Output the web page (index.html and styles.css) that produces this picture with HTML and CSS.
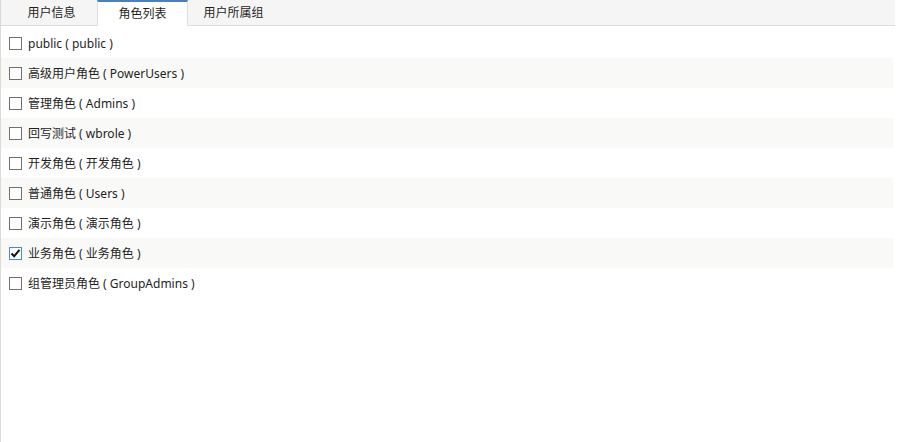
FILE: index.html
```html
<!DOCTYPE html>
<html lang="zh-CN">
<head>
<meta charset="utf-8">
<title>角色列表</title>
<link rel="stylesheet" href="styles.css">
</head>
<body>
<div class="panel">
  <div class="tabs">
    <div class="tab">用户信息</div>
    <div class="tab active">角色列表</div>
    <div class="tab">用户所属组</div>
  </div>
  <ul class="list">
    <li class="row"><span class="cb"></span><span class="label">public ( public )</span></li>
    <li class="row"><span class="cb"></span><span class="label">高级用户角色 ( PowerUsers )</span></li>
    <li class="row"><span class="cb"></span><span class="label">管理角色 ( Admins )</span></li>
    <li class="row"><span class="cb"></span><span class="label">回写测试 ( wbrole )</span></li>
    <li class="row"><span class="cb"></span><span class="label">开发角色 ( 开发角色 )</span></li>
    <li class="row"><span class="cb"></span><span class="label">普通角色 ( Users )</span></li>
    <li class="row"><span class="cb"></span><span class="label">演示角色 ( 演示角色 )</span></li>
    <li class="row"><span class="cb checked"><svg viewBox="0 0 13 13" width="13" height="13"><path d="M2.5 6.5 L5.2 9.2 L10.5 2.8" fill="none" stroke="#111" stroke-width="2"/></svg></span><span class="label">业务角色 ( 业务角色 )</span></li>
    <li class="row"><span class="cb"></span><span class="label">组管理员角色 ( GroupAdmins )</span></li>
  </ul>
</div>
</body>
</html>
```
FILE: styles.css
```css
html, body {
  margin: 0;
  padding: 0;
  background: #fff;
}
body {
  font-family: "Noto Sans", "Noto Sans CJK SC", sans-serif;
  font-size: 12px;
  color: #1e1e1e;
}
.panel {
  height: 442px;
  box-sizing: border-box;
  border-left: 1px solid #dcdad6;
  display: flex;
  flex-direction: column;
}
.tabs {
  display: flex;
  height: 25px;
  background: #f5f5f5;
  border-bottom: 1px solid #dedede;
  margin-right: 2px;
  padding-left: 5px;
}
.tab {
  width: 89px;
  text-align: center;
  line-height: 25px;
  border-left: 1px solid transparent;
  border-right: 1px solid transparent;
  color: #1e1e1e;
}
.tab.active {
  background: #fff;
  border-top: 2px solid #4a80c2;
  border-left-color: #dedede;
  border-right-color: #dedede;
  line-height: 23px;
  height: 24px;
  margin-bottom: -1px;
}
.list {
  list-style: none;
  margin: 2px 4px 0 0;
  padding: 0;
}
.row {
  height: 30px;
  display: flex;
  align-items: center;
  padding-left: 8px;
}
.row:nth-child(even) {
  background: #f9f9f7;
}
.cb {
  width: 13px;
  height: 13px;
  box-sizing: border-box;
  border: 1px solid #707070;
  background: #fff;
  margin-right: 6px;
  position: relative;
}
.cb.checked {
  border-color: #3a8ee6;
}
.cb svg {
  position: absolute;
  left: -1px;
  top: -1px;
}
.label {
  line-height: 16px;
  padding-top: 2px;
}
```
